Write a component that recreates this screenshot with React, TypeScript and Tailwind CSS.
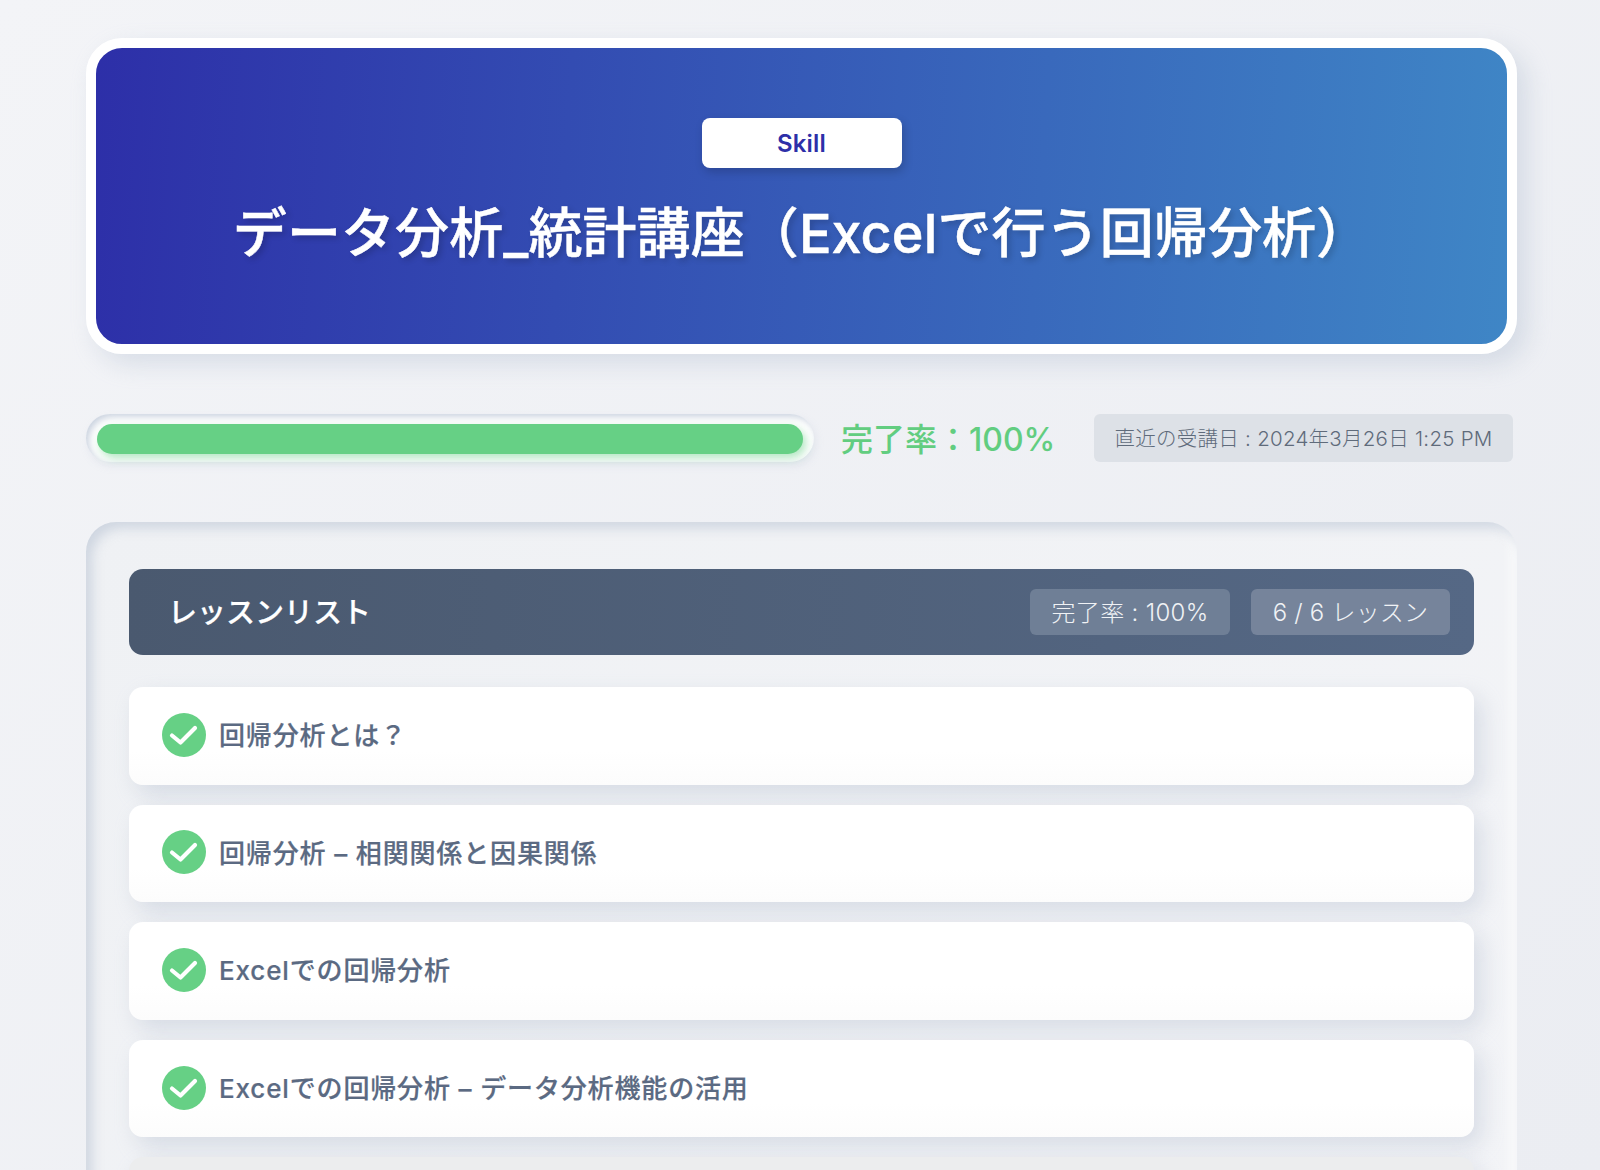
const FONT = "font-['Inter','Noto_Sans_CJK_JP',sans-serif]";

function Check() {
  return (
    <svg viewBox="0 0 44 44" className="w-[44px] h-[44px] shrink-0">
      <circle cx="22" cy="22" r="22" fill="#66d085" />
      <path d="M10 22.5 L18.5 29.5 L33 15" fill="none" stroke="#ffffff" strokeWidth="4.2" strokeLinecap="round" strokeLinejoin="round" />
    </svg>
  );
}

function Lesson({ title }: { title: string }) {
  return (
    <div className="h-[97.6px] rounded-[14px] bg-[linear-gradient(180deg,#ffffff_65%,#fcfcfc)] shadow-[8px_10px_22px_rgba(163,177,198,0.33)] flex items-center gap-[13px] pl-[33px] pb-[2px]">
      <Check />
      <span className="pt-[2px] text-[26px] font-medium text-[#5b6a82] tracking-[0.85px] [-webkit-text-stroke:0.2px_#5b6a82]">{title}</span>
    </div>
  );
}

export default function App() {
  return (
    <div className={`${FONT} h-[1170px] overflow-hidden bg-[linear-gradient(135deg,#f3f4f7,#ebedf2)] antialiased`}>
      <div className="ml-[86px] w-[1431px] pt-[38px]">
        <header className="h-[316px] rounded-[36px] border-[10px] border-white bg-[linear-gradient(94deg,#2d2fa8,#3f86c6)] shadow-[10px_10px_24px_rgba(163,177,198,0.32)] flex flex-col items-center pt-[70px]">
          <div className="w-[200px] h-[50px] rounded-[8px] bg-white flex items-center justify-center pt-[2px] text-[24px] font-semibold tracking-[0.2px] text-[#2d2fa8] shadow-[2px_4px_10px_rgba(0,0,0,0.18)]">
            Skill
          </div>
          <h1 className="mt-[31px] text-[54px] tracking-[0.1px] leading-[70px] font-medium text-white [-webkit-text-stroke:0.5px_#ffffff] [text-shadow:3px_3px_6px_rgba(0,0,0,0.2)]">
            データ分析_統計講座（Excelで行う回帰分析）
          </h1>
        </header>

        <div className="mt-[60px] flex items-center h-[48px]">
          <div className="w-[728px] h-[48px] rounded-[24px] bg-white shadow-[inset_3px_3px_6px_rgba(163,177,198,0.55),2px_4px_8px_rgba(163,177,198,0.15)] pl-[11px] pr-[11px] pt-[2px] flex items-center">
            <div className="w-full h-[30px] rounded-[15px] bg-[#66d085] shadow-[3px_4px_9px_rgba(102,208,133,0.5)]" />
          </div>
          <div className="ml-[27px] pt-[3px] text-[32px] font-medium text-[#62cd80] whitespace-nowrap">完了率：100%</div>
          <div className="ml-auto mr-[4px] w-[419px] h-[48px] rounded-[6px] bg-[#dde1e7] flex items-center justify-center pt-[2px] text-[20.5px] tracking-[0.26px] font-light text-[#5f6b7b] whitespace-nowrap">
            直近の受講日 : 2024年3月26日 1:25 PM
          </div>
        </div>

        <section className="mt-[60px] rounded-[30px] bg-[linear-gradient(135deg,#eff1f4,#f3f4f7)] shadow-[inset_6px_6px_12px_rgba(163,177,198,0.42),inset_-6px_-6px_12px_rgba(255,255,255,0.7)] px-[43px] pt-[47px] pb-[40px]">
          <div className="h-[86px] rounded-[14px] bg-[linear-gradient(92deg,#4a596f,#556885)] flex items-center pl-[39px] pr-[24px]">
            <h2 className="pt-[2px] text-[29px] font-medium text-white [-webkit-text-stroke:0.2px_#ffffff]">レッスンリスト</h2>
            <div className="ml-auto flex gap-[21px]">
              <span className="w-[200px] h-[46px] rounded-[6px] bg-[#6f7f96] flex items-center justify-center pt-[2px] text-[24px] tracking-[0.3px] font-light text-[#f0f2f5]">完了率 : 100%</span>
              <span className="w-[199px] h-[46px] rounded-[6px] bg-[#76849b] flex items-center justify-center pt-[2px] text-[24px] tracking-[0.2px] font-light text-[#f0f2f5]">6 / 6 レッスン</span>
            </div>
          </div>
          <div className="mt-[32px] flex flex-col gap-[20px]">
            <Lesson title="回帰分析とは？" />
            <Lesson title="回帰分析 – 相関関係と因果関係" />
            <Lesson title="Excelでの回帰分析" />
            <Lesson title="Excelでの回帰分析 – データ分析機能の活用" />
            <div className="h-[97.6px] rounded-[14px] bg-[#ecedee] shadow-[8px_10px_22px_rgba(163,177,198,0.33)]" />
          </div>
        </section>
      </div>
    </div>
  );
}
